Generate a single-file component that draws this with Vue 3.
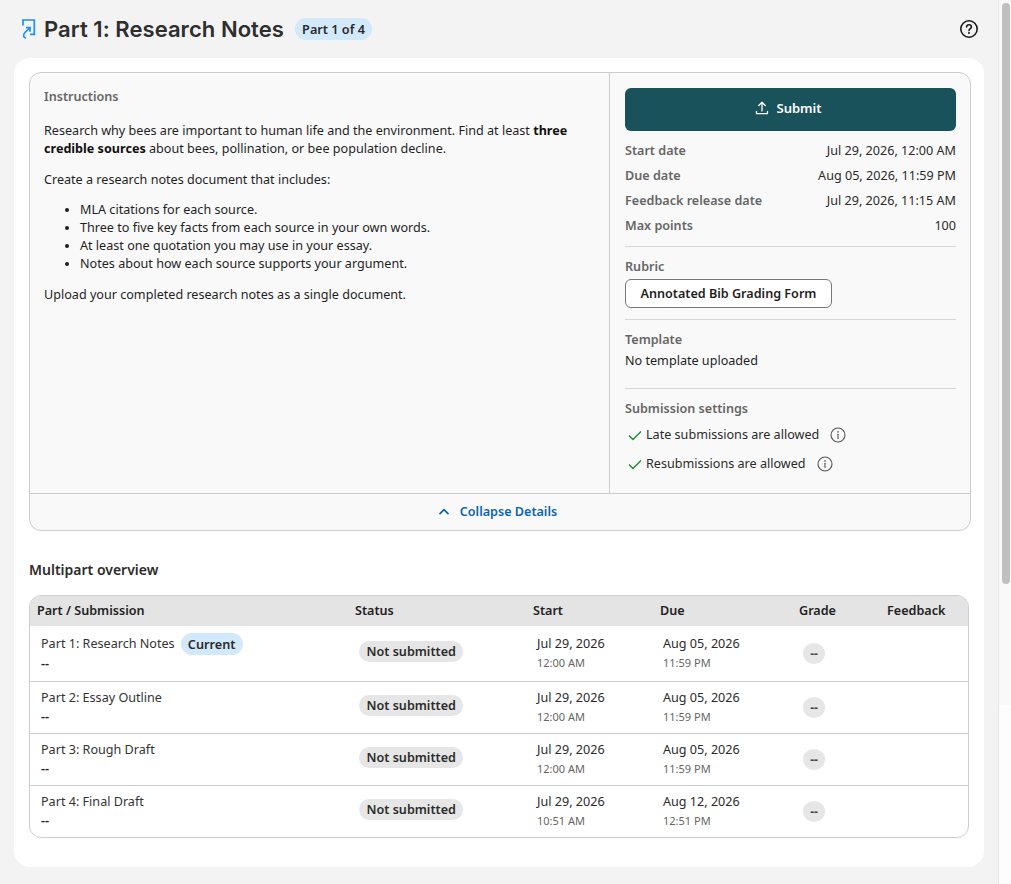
<template>
  <div class="page">
    <div class="main">
      <header class="top">
        <div class="title-group">
          <svg class="part-icon" width="16" height="22" viewBox="0 0 16 22" fill="none" stroke="#1a8fff" stroke-width="1.7">
            <path d="M2 7.5V2H13.3V16.3H9" />
            <path d="M5 9.7H9V13.7" />
            <path d="M9 9.7L4 14.5C2 16.5 2 19.5 5 20" />
          </svg>
          <h1 class="title">Part 1: Research Notes</h1>
          <span class="pill blue">Part 1 of 4</span>
        </div>
        <svg class="help" width="20" height="20" viewBox="0 0 20 20" fill="none" stroke="#1b1b1b" stroke-width="1.6">
          <circle cx="10" cy="10" r="8.2" />
          <path d="M7.6 8C7.6 6.6 8.7 5.8 10 5.8C11.4 5.8 12.4 6.7 12.4 7.9C12.4 9.6 10 9.7 10 11.6" stroke-linecap="round" />
          <circle cx="10" cy="14.1" r="1" fill="#1b1b1b" stroke="none" />
        </svg>
      </header>

      <main class="card">
        <section class="details">
          <div class="details-body">
            <div class="instructions">
              <h2 class="label">Instructions</h2>
              <p class="para first">
                Research why bees are important to human life and the environment. Find at least
                <strong>three credible sources</strong> about bees, pollination, or bee population decline.
              </p>
              <p class="para second">Create a research notes document that includes:</p>
              <ul class="list">
                <li v-for="item in noteItems" :key="item">{{ item }}</li>
              </ul>
              <p class="para">Upload your completed research notes as a single document.</p>
            </div>

            <aside class="side">
              <button class="submit" type="button">
                <svg width="14" height="14" viewBox="0 0 14 14" fill="none" stroke="#fff" stroke-width="1.3">
                  <path d="M7 10V1.5M3.8 4.5L7 1.3L10.2 4.5" stroke-linecap="round" stroke-linejoin="round" />
                  <path d="M1.5 10.5V12.6H12.5V10.5" stroke-linecap="round" stroke-linejoin="round" />
                </svg>
                Submit
              </button>
              <dl class="dates">
                <div v-for="row in dateRows" :key="row.label" class="date-row">
                  <dt class="label">{{ row.label }}</dt>
                  <dd>{{ row.value }}</dd>
                </div>
              </dl>
              <div class="block rubric">
                <div class="label">Rubric</div>
                <button class="outline" type="button">Annotated Bib Grading Form</button>
              </div>
              <div class="block template">
                <div class="label">Template</div>
                <div class="plain">No template uploaded</div>
              </div>
              <div class="block settings">
                <div class="label">Submission settings</div>
                <div v-for="s in settings" :key="s" class="setting">
                  <svg width="16" height="16" viewBox="0 0 16 16" fill="none" stroke="#1a8a2e" stroke-width="1.4">
                    <path d="M2 8.6L6 12.6L14 4.6" />
                  </svg>
                  <span>{{ s }}</span>
                  <svg class="info" width="16" height="16" viewBox="0 0 16 16" fill="none" stroke="#555" stroke-width="1.1">
                    <circle cx="8" cy="8" r="7" />
                    <path d="M8 7.2V11.4" stroke-linecap="round" />
                    <circle cx="8" cy="4.9" r="0.8" fill="#555" stroke="none" />
                  </svg>
                </div>
              </div>
            </aside>
          </div>
          <button class="collapse" type="button">
            <svg width="10" height="7" viewBox="0 0 10 7" fill="none" stroke="#0a66b0" stroke-width="1.7">
              <path d="M1 5.6L5 1.6L9 5.6" stroke-linecap="round" stroke-linejoin="round" />
            </svg>
            Collapse Details
          </button>
        </section>

        <h2 class="overview-title">Multipart overview</h2>

        <div class="table-wrap">
          <table class="parts">
            <colgroup>
              <col class="c-part" />
              <col class="c-status" />
              <col class="c-start" />
              <col class="c-due" />
              <col class="c-grade" />
              <col />
            </colgroup>
            <thead>
              <tr>
                <th>Part / Submission</th>
                <th>Status</th>
                <th>Start</th>
                <th>Due</th>
                <th>Grade</th>
                <th>Feedback</th>
              </tr>
            </thead>
            <tbody>
              <tr v-for="part in parts" :key="part.name" :class="{ tall: part.current }">
                <td class="part-cell">
                  <div class="part-name">
                    {{ part.name }}
                    <span v-if="part.current" class="pill blue">Current</span>
                  </div>
                  <div class="dash">--</div>
                </td>
                <td class="status-cell"><span class="pill grey">Not submitted</span></td>
                <td class="date-cell">
                  <div class="day">{{ part.startDay }}</div>
                  <div class="time">{{ part.startTime }}</div>
                </td>
                <td class="date-cell">
                  <div class="day">{{ part.dueDay }}</div>
                  <div class="time">{{ part.dueTime }}</div>
                </td>
                <td class="grade-cell"><span class="grade">--</span></td>
                <td></td>
              </tr>
            </tbody>
          </table>
        </div>
      </main>
    </div>
    <div class="scrollbar"><div class="thumb"></div></div>
  </div>
</template>

<script setup>
const noteItems = [
  'MLA citations for each source.',
  'Three to five key facts from each source in your own words.',
  'At least one quotation you may use in your essay.',
  'Notes about how each source supports your argument.',
]

const dateRows = [
  { label: 'Start date', value: 'Jul 29, 2026, 12:00 AM' },
  { label: 'Due date', value: 'Aug 05, 2026, 11:59 PM' },
  { label: 'Feedback release date', value: 'Jul 29, 2026, 11:15 AM' },
  { label: 'Max points', value: '100' },
]

const settings = ['Late submissions are allowed', 'Resubmissions are allowed']

const parts = [
  { name: 'Part 1: Research Notes', current: true, startDay: 'Jul 29, 2026', startTime: '12:00 AM', dueDay: 'Aug 05, 2026', dueTime: '11:59 PM' },
  { name: 'Part 2: Essay Outline', startDay: 'Jul 29, 2026', startTime: '12:00 AM', dueDay: 'Aug 05, 2026', dueTime: '11:59 PM' },
  { name: 'Part 3: Rough Draft', startDay: 'Jul 29, 2026', startTime: '12:00 AM', dueDay: 'Aug 05, 2026', dueTime: '11:59 PM' },
  { name: 'Part 4: Final Draft', startDay: 'Jul 29, 2026', startTime: '10:51 AM', dueDay: 'Aug 12, 2026', dueTime: '12:51 PM' },
]
</script>

<style>
html, body {
  margin: 0;
  background: #f3f3f3;
  overflow: hidden;
}
</style>

<style scoped>
.page {
  display: flex;
  height: 884px;
  overflow: hidden;
  font-family: "Noto Sans", sans-serif;
  font-size: 12.6px;
  line-height: 18px;
  color: #1f1f1f;
  background: #f3f3f3;
}

.main {
  width: 998px;
  flex: none;
  padding: 0 14px;
  box-sizing: border-box;
}

.top {
  height: 58px;
  display: flex;
  align-items: center;
  justify-content: space-between;
  padding: 0 5px 0 7px;
}

.title-group {
  display: flex;
  align-items: center;
}

.part-icon {
  margin-right: 7px;
}

.title {
  margin: 0 11px 0 0;
  font-family: Inter, sans-serif;
  font-size: 22px;
  font-weight: 600;
  letter-spacing: 0.05px;
  line-height: 30px;
  color: #2e2e2e;
}

.pill {
  display: inline-block;
  border-radius: 11px;
  font-weight: 600;
  white-space: nowrap;
}

.pill.blue {
  background: #d2e8fb;
  color: #2b2b2b;
  font-size: 12.7px;
  line-height: 22px;
  padding: 0 7.2px;
}

.pill.grey {
  background: #e6e6e6;
  color: #2b2b2b;
  line-height: 21px;
  padding: 0 7.5px;
}

.card {
  background: #fff;
  border-radius: 16px;
  padding: 14px 13px 29px 15px;
  height: 809px;
  box-sizing: border-box;
}

.details {
  border: 1px solid #cdcdcd;
  border-radius: 12px;
  background: #f9f9f9;
}

.details-body {
  display: flex;
  height: 420px;
  border-bottom: 1px solid #cdcdcd;
}

.instructions {
  width: 580px;
  flex: none;
  box-sizing: border-box;
  padding: 15px 14px;
  border-right: 1px solid #cdcdcd;
}

.label {
  margin: 0;
  font-size: 12.6px;
  font-weight: 600;
  line-height: 18px;
  color: #666;
}

.para {
  margin: 0 0 13px;
  line-height: 18px;
}

.para.first {
  margin-top: 16px;
}

.para.second {
  margin-bottom: 12px;
}

.para strong {
  color: #111;
}

.list {
  margin: 0 0 13px;
  padding-left: 36px;
  line-height: 18px;
}

.side {
  flex: 1;
  padding: 15px 14px 0 15px;
}

.submit {
  width: 100%;
  height: 43px;
  border: 0;
  border-radius: 6px;
  padding: 0 4px 3px 0;
  background: #1a525c;
  color: #fff;
  font: 600 13px "Noto Sans", sans-serif;
  display: flex;
  align-items: center;
  justify-content: center;
  gap: 7px;
}

.dates {
  margin: 7px 0 0;
}

.date-row {
  display: flex;
  justify-content: space-between;
  height: 25px;
  align-items: center;
}

.date-row dd {
  margin: 0;
  color: #2b2b2b;
}

.block {
  border-top: 1px solid #d6d6d6;
}

.rubric {
  margin-top: 8px;
  padding: 11px 0;
}

.outline {
  display: block;
  margin-top: 3px;
  padding: 0;
  width: 207px;
  height: 29px;
  background: #fff;
  border: 1px solid #777;
  border-radius: 6px;
  font: 600 12.6px "Noto Sans", sans-serif;
  color: #1f1f1f;
}

.template {
  padding: 11px 0 18px;
}

.plain {
  margin-top: 3px;
}

.settings {
  padding-top: 11px;
}

.settings .label {
  margin-bottom: 2px;
}

.setting {
  display: flex;
  align-items: center;
  height: 29px;
  padding-left: 2px;
  color: #2b2b2b;
}

.setting span {
  margin-left: 3px;
}

.info {
  margin-left: 11px;
}

.collapse {
  width: 100%;
  height: 36px;
  border: 0;
  padding: 0 4px 2px 0;
  background: transparent;
  color: #0a66b0;
  font: 600 12.6px "Noto Sans", sans-serif;
  display: flex;
  align-items: center;
  justify-content: center;
  gap: 11px;
}

.overview-title {
  margin: 29px 0 15px;
  font-size: 14px;
  font-weight: 600;
  line-height: 20px;
  color: #2b2b2b;
}

.table-wrap {
  width: 940px;
  border: 1px solid #cdcdcd;
  border-radius: 12px;
  overflow: hidden;
  box-sizing: border-box;
}

.parts {
  width: 100%;
  table-layout: fixed;
  border-collapse: separate;
  border-spacing: 0;
}

.c-part { width: 318px; }
.c-status { width: 178px; }
.c-start { width: 127px; }
.c-due { width: 139px; }
.c-grade { width: 88px; }

th {
  height: 30px;
  padding: 0 0 0 7px;
  background: #e4e4e4;
  text-align: left;
  font-size: 12.6px;
  font-weight: 600;
  color: #222;
}

td {
  box-sizing: border-box;
  padding: 0;
  height: 52px;
  border-top: 1px solid #cdcdcd;
  vertical-align: top;
}

tbody tr.tall td {
  border-top: 0;
  height: 55px;
}

.part-cell {
  padding: 7px 0 0 11px;
}

.part-name {
  color: #333;
  line-height: 18px;
}

tbody tr.tall .part-cell {
  padding-top: 7px;
}

.tall .part-name {
  display: flex;
  align-items: center;
  gap: 6px;
  height: 22px;
}

.dash {
  margin-top: 1px;
  font-weight: 600;
  line-height: 18px;
  color: #222;
}

.tall .dash {
  margin-top: 0;
}

.status-cell {
  padding: 13px 0 0 11px;
}

tbody tr.tall .status-cell {
  padding-top: 15px;
}

.date-cell {
  padding: 7px 0 0 11px;
}

.date-cell + .date-cell {
  padding-left: 10px;
}

tbody tr.tall .date-cell {
  padding-top: 9px;
}

.day {
  line-height: 18px;
  color: #2b2b2b;
}

.time {
  font-size: 11px;
  line-height: 19px;
  color: #666;
}

.grade-cell {
  padding: 15px 0 0 11px;
}

tbody tr.tall .grade-cell {
  padding-top: 17px;
}

.grade {
  display: flex;
  align-items: center;
  justify-content: center;
  width: 22px;
  height: 21px;
  border-radius: 50%;
  background: #e6e6e6;
  font-size: 12px;
  font-weight: 700;
  color: #444;
}

.scrollbar {
  flex: 1;
  border-left: 1px solid #e6e6e6;
  background: linear-gradient(#f9f9f9 705px, #fdfdfd 705px);
  padding: 3px 1px 0 3px;
}

.thumb {
  height: 581px;
  background: #c0c0c0;
  border-radius: 4px;
}
</style>
